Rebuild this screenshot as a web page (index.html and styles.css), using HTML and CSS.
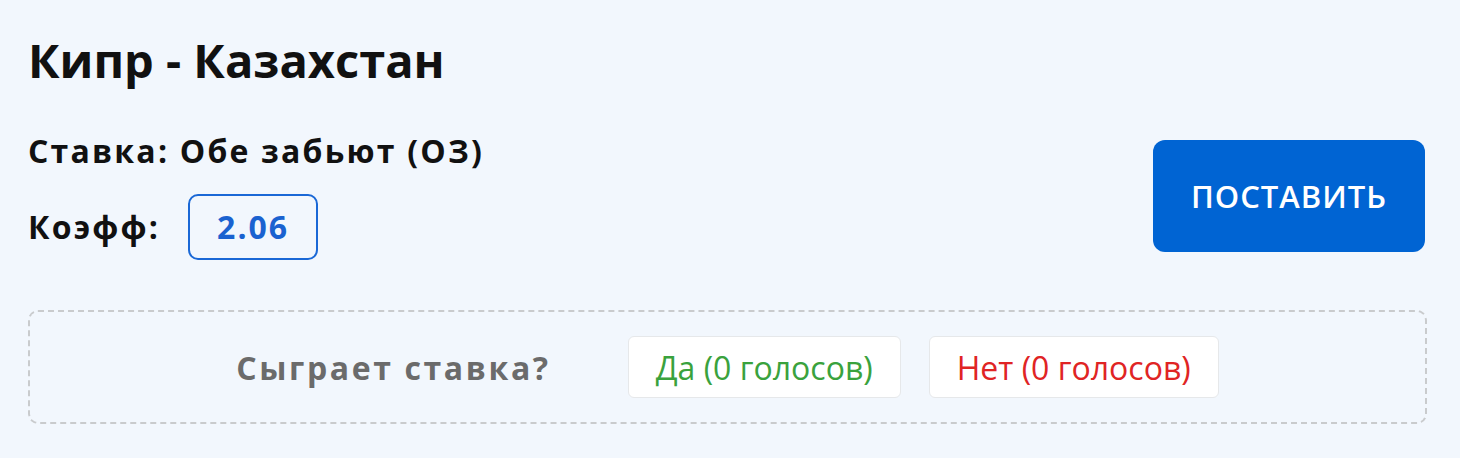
FILE: index.html
```html
<!DOCTYPE html>
<html lang="ru">
<head>
<meta charset="utf-8">
<link rel="stylesheet" href="styles.css">
</head>
<body>
<div class="card">
  <h1 class="title">Кипр - Казахстан</h1>
  <div class="bet-row">
    <div class="bet-info">
      <div class="bet-line">Ставка: Обе забьют (ОЗ)</div>
      <div class="bet-line coef-line">Коэфф: <span class="coef">2.06</span></div>
    </div>
    <button class="place-btn">ПОСТАВИТЬ</button>
  </div>
  <div class="poll">
    <span class="poll-q">Сыграет ставка?</span>
    <button class="vote vote-yes">Да (0 голосов)</button>
    <button class="vote vote-no">Нет (0 голосов)</button>
  </div>
</div>
</body>
</html>
```
FILE: styles.css
```css
* { box-sizing: border-box; }
html, body { margin: 0; padding: 0; }
body {
  background: #f2f7fd;
  font-family: "Open Sans", "Noto Sans", sans-serif;
  color: #111;
  width: 1460px;
  height: 458px;
  overflow: hidden;
}
.card {
  padding: 30px 33px 0 28px;
}
.title {
  margin: 0;
  font-size: 47px;
  line-height: 60px;
  font-weight: 700;
  color: #111;
}
.bet-row {
  display: flex;
  align-items: center;
  justify-content: space-between;
  margin-top: 41px;
}
.bet-info {
  display: flex;
  flex-direction: column;
  gap: 23px;
}
.bet-line {
  font-size: 32px;
  font-weight: 700;
  line-height: 40px;
  letter-spacing: 2.2px;
}
.coef-line {
  display: flex;
  align-items: center;
  gap: 28px;
}
.coef {
  display: inline-flex;
  align-items: center;
  justify-content: center;
  width: 130px;
  height: 66px;
  border: 2px solid #1a68d6;
  border-radius: 10px;
  color: #1a62d0;
  font-size: 32px;
  letter-spacing: 2px;
}
.place-btn {
  width: 272px;
  height: 112px;
  margin-right: 2px;
  border: none;
  border-radius: 12px;
  background: #0064d3;
  color: #fff;
  font-family: inherit;
  font-size: 31px;
  font-weight: 600;
  letter-spacing: 1px;
}
.poll {
  margin-top: 50px;
  height: 114px;
  border: 2px dashed #c9cbcd;
  border-radius: 10px;
  display: flex;
  align-items: center;
  justify-content: center;
}
.poll-q {
  font-size: 32px;
  font-weight: 700;
  color: #6b6b6b;
  letter-spacing: 2.6px;
  margin-right: 77px;
}
.vote {
  height: 62px;
  padding: 0 27px;
  background: #fff;
  border: 1px solid #e6e8ea;
  border-radius: 6px;
  font-family: inherit;
  font-size: 32px;
  font-weight: 400;
}
.vote-yes { color: #3aa23d; margin-right: 28px; }
.vote-no { color: #e02424; }
```
